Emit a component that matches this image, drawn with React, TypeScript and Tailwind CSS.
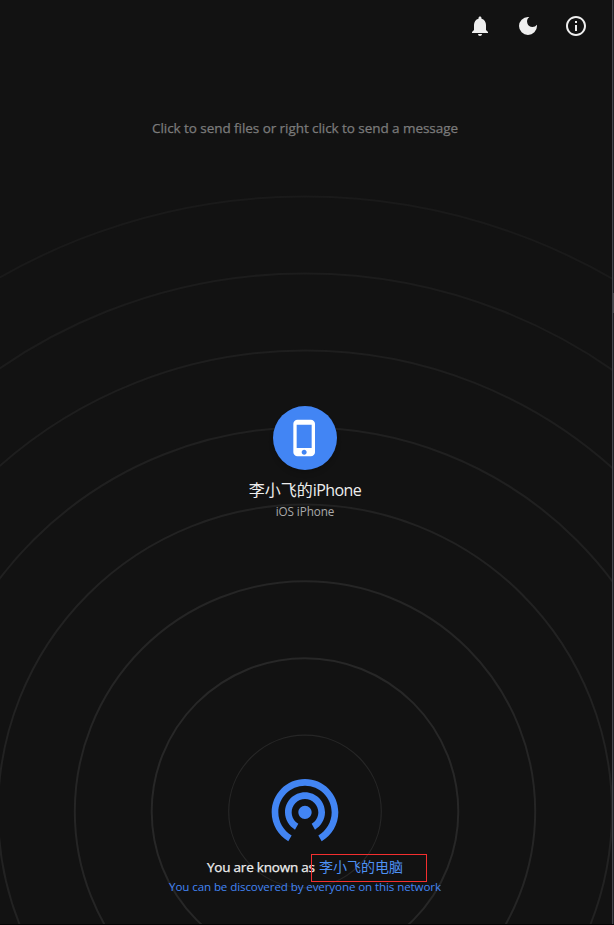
import React from "react";
import { MdNotifications, MdDarkMode, MdInfoOutline, MdPhoneIphone, MdWifiTethering } from "react-icons/md";

const rings = [
  { r: 76.3, color: "#262626", width: 1.2 },
  { r: 153.3, color: "#272727", width: 2 },
  { r: 230.2, color: "#252525", width: 2 },
  { r: 307, color: "#222222", width: 2 },
  { r: 384, color: "#202020", width: 2 },
  { r: 461, color: "#1e1e1e", width: 2 },
  { r: 538, color: "#1c1c1c", width: 2 },
  { r: 615, color: "#1a1a1a", width: 2 },
];

function Ripples() {
  return (
    <svg className="absolute inset-0" width="614" height="925" viewBox="0 0 614 925" fill="none">
      {rings.map((ring) => (
        <circle key={ring.r} cx="305" cy="811.5" r={ring.r} stroke={ring.color} strokeWidth={ring.width} />
      ))}
    </svg>
  );
}

export default function App() {
  return (
    <div className="relative h-[925px] w-[614px] overflow-hidden bg-[#121212] font-['Open_Sans','Noto_Sans_CJK_SC',sans-serif] whitespace-nowrap text-[#eeeeee]">
      <Ripples />
      <div className="relative flex h-full w-[610px] flex-col items-center">
        <header className="flex h-[52px] w-full items-center justify-end gap-6 pr-[22px]">
          <MdNotifications size={24} />
          <MdDarkMode size={24} />
          <MdInfoOutline size={24} />
        </header>
        <p className="mt-[66px] text-[13.5px] leading-5 tracking-[-0.06px] text-[#7b7b7b] [-webkit-text-stroke:0.25px]">
          Click to send files or right click to send a message
        </p>
        <section className="mt-[268px] flex flex-col items-center">
          <div className="flex size-16 items-center justify-center rounded-full bg-[#4285f4] text-white shadow-md">
            <MdPhoneIphone size={40} />
          </div>
          <div className="mt-[9px] text-[16px] leading-[22px]">
            李小飞的<span className="tracking-[-0.55px]">iPhone</span>
          </div>
          <div className="mt-px text-[11.7px] leading-[18px] tracking-[-0.07px] text-[#aaaaaa]">iOS iPhone</div>
        </section>
        <footer className="mt-[249px] flex flex-col items-center">
          <MdWifiTethering size={80} className="text-[#4285f4]" />
          <div className="mt-[5px] flex h-7 w-[244px] items-center justify-end text-[14px] leading-5">
            <span className="w-[104px] pb-[3px] text-[13.5px] tracking-[-0.22px] [-webkit-text-stroke:0.25px]">You are known as</span>
            <span className="flex h-7 w-[116px] items-center border border-[#f32f2f] pb-[2px] pl-[7px] text-[#4e91f5]">
              李小飞的电脑
            </span>
          </div>
          <p className="-mt-[4px] text-[11.6px] leading-[18px] tracking-[-0.11px] text-[#4285f4]">
            You can be discovered by everyone on this network
          </p>
        </footer>
      </div>
      <div className="absolute top-0 right-px h-full w-px bg-[#45464e]" />
      <div className="absolute top-0 right-0 h-full w-px bg-[#202124]" />
      <div className="absolute top-[293px] right-0 h-5 w-px bg-[#454649]" />
      <div className="absolute bottom-0 left-0 h-px w-full bg-[#040404]" />
    </div>
  );
}
